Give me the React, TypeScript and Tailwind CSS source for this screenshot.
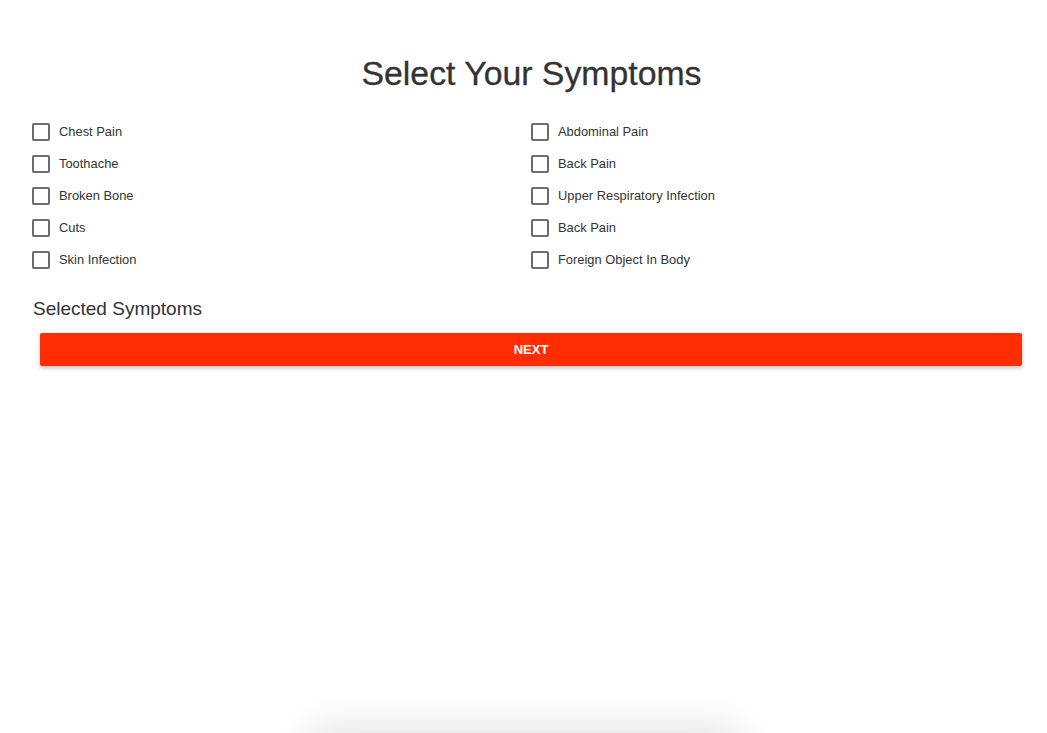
import { useState } from "react";

const left = ["Chest Pain", "Toothache", "Broken Bone", "Cuts", "Skin Infection"];
const right = ["Abdominal Pain", "Back Pain", "Upper Respiratory Infection", "Back Pain", "Foreign Object In Body"];

function SymptomBox({ label, checked, onToggle }: { label: string; checked: boolean; onToggle: () => void }) {
  return (
    <label className="flex items-center h-[32px] cursor-pointer select-none">
      <span
        onClick={onToggle}
        className={
          "w-[18px] h-[18px] rounded-[2px] border-2 flex items-center justify-center " +
          (checked ? "bg-[#ff2d00] border-[#ff2d00]" : "border-[#6b6b6b] bg-white")
        }
      >
        {checked && (
          <svg viewBox="0 0 24 24" className="w-[14px] h-[14px]" fill="none" stroke="white" strokeWidth="3">
            <path d="M5 12l5 5L20 7" />
          </svg>
        )}
      </span>
      <span className="ml-[9px] text-[12.9px] text-[#333]">{label}</span>
    </label>
  );
}

export default function App() {
  const [selected, setSelected] = useState<string[]>([]);

  const toggle = (key: string) => {
    setSelected((s) => (s.includes(key) ? s.filter((k) => k !== key) : [...s, key]));
  };

  return (
    <div className="min-h-[733px] bg-white font-['Liberation_Sans',Arial,sans-serif] text-[#333]">
      <h1 className="pt-[53px] pl-[16px] text-center text-[33.8px] leading-[40px] text-[#333] [-webkit-text-stroke:0.3px_#333]">
        Select Your Symptoms
      </h1>

      <div className="mt-[23px] pl-[32px] grid grid-cols-[499px_1fr]">
        <div className="flex flex-col">
          {left.map((s, i) => (
            <SymptomBox key={"l" + i} label={s} checked={selected.includes("l" + i)} onToggle={() => toggle("l" + i)} />
          ))}
        </div>
        <div className="flex flex-col">
          {right.map((s, i) => (
            <SymptomBox key={"r" + i} label={s} checked={selected.includes("r" + i)} onToggle={() => toggle("r" + i)} />
          ))}
        </div>
      </div>

      <h2 className="mt-[21px] pl-[33px] text-[19px] leading-[24px] text-[#333]">Selected Symptoms</h2>

      <div className="mt-[12px] pl-[40px] pr-[25px]">
        <button className="w-full h-[33px] bg-[#ff2d00] text-white text-[13px] font-bold uppercase rounded-[2px] shadow-[0_2px_4px_rgba(0,0,0,0.25)]">
          Next
        </button>
      </div>

      {/* bottom sheet peeking from below */}
      <div className="fixed left-[320px] top-[738px] w-[410px] h-[60px] bg-white rounded-t-lg shadow-[0_0_40px_10px_rgba(0,0,0,0.12)]" />
    </div>
  );
}
